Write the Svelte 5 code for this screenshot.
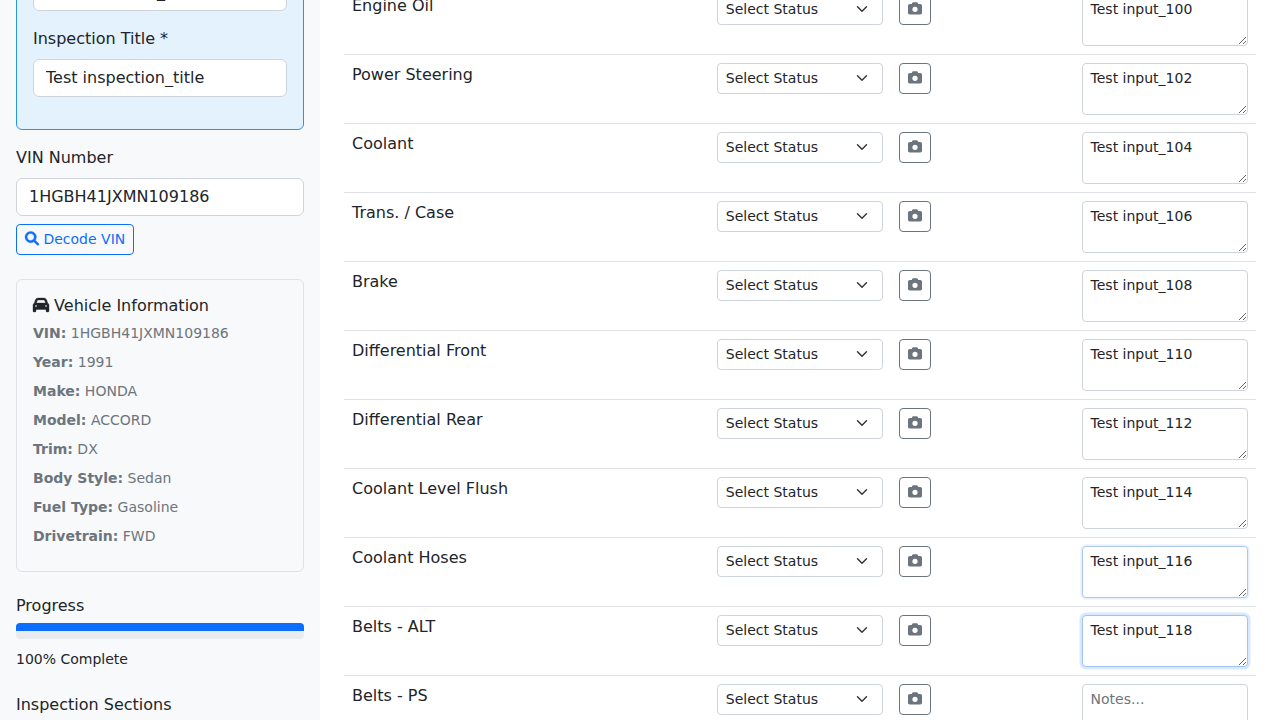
<script>
  const vehicle = [
    ['VIN', '1HGBH41JXMN109186'],
    ['Year', '1991'],
    ['Make', 'HONDA'],
    ['Model', 'ACCORD'],
    ['Trim', 'DX'],
    ['Body Style', 'Sedan'],
    ['Fuel Type', 'Gasoline'],
    ['Drivetrain', 'FWD'],
  ];

  const items = [
    { name: 'Engine Oil', note: 'Test input_100' },
    { name: 'Power Steering', note: 'Test input_102' },
    { name: 'Coolant', note: 'Test input_104' },
    { name: 'Trans. / Case', note: 'Test input_106' },
    { name: 'Brake', note: 'Test input_108' },
    { name: 'Differential Front', note: 'Test input_110' },
    { name: 'Differential Rear', note: 'Test input_112' },
    { name: 'Coolant Level Flush', note: 'Test input_114' },
    { name: 'Coolant Hoses', note: 'Test input_116', state: 'leaving' },
    { name: 'Belts - ALT', note: 'Test input_118', state: 'entering' },
    { name: 'Belts - PS', note: '' },
  ];

  const progress = 100;
</script>

<div class="page">
  <aside class="sidebar">
    <section class="details">
      <label for="inspector">Inspector Name *</label>
      <input id="inspector" class="control" type="text" value="Test inspector_name" />
      <label for="title">Inspection Title *</label>
      <input id="title" class="control" type="text" value="Test inspection_title" />
    </section>

    <section class="vin">
      <label for="vin">VIN Number</label>
      <input id="vin" class="control" type="text" value="1HGBH41JXMN109186" />
      <button class="btn decode" type="button">
        <svg class="icon heavy" viewBox="0 0 512 512" aria-hidden="true"><path d="M500.3 443.7l-119.7-119.7c27.22-40.41 40.65-90.9 33.46-144.7C401.8 87.79 326.8 13.32 235.2 1.723C99.01-15.51-15.51 99.01 1.724 235.2c11.6 91.64 86.08 166.7 177.6 178.9c53.8 7.189 104.3-6.236 144.7-33.46l119.7 119.7c15.62 15.62 40.95 15.62 56.57 0C515.9 484.7 515.9 459.3 500.3 443.7zM79.1 208c0-70.58 57.42-128 128-128s128 57.42 128 128c0 70.58-57.42 128-128 128S79.1 278.6 79.1 208z" /></svg>
        Decode VIN
      </button>
    </section>

    <section class="vehicle">
      <h6>
        <svg class="icon heavy" viewBox="0 0 512 512" aria-hidden="true"><path d="M135.2 117.4L109.1 192H402.9l-26.1-74.6C372.3 104.6 360.2 96 346.6 96H165.4c-13.6 0-25.7 8.6-30.2 21.4zM39.6 196.8L74.8 96.3C88.3 57.8 124.6 32 165.4 32H346.6c40.8 0 77.1 25.8 90.6 64.3l35.2 100.5c23.2 9.6 39.6 32.5 39.6 59.2V400v48c0 17.7-14.3 32-32 32H448c-17.7 0-32-14.3-32-32V400H96v48c0 17.7-14.3 32-32 32H32c-17.7 0-32-14.3-32-32V400 256c0-26.7 16.4-49.6 39.6-59.2zM128 288a32 32 0 1 0 -64 0 32 32 0 1 0 64 0zm288 32a32 32 0 1 0 0-64 32 32 0 1 0 0 64z" /></svg>
        Vehicle Information
      </h6>
      {#each vehicle as [key, value]}
        <p><strong>{key}:</strong> {value}</p>
      {/each}
    </section>

    <section class="progress-block">
      <h6>Progress</h6>
      <div class="track"><div class="bar" style="width: {progress}%"></div></div>
      <div class="percent"><small>{progress}% Complete</small></div>
    </section>

    <h6>Inspection Sections</h6>
  </aside>

  <main class="main">
    {#each items as item}
      <div class="row">
        <div class="cell">{item.name}</div>
        <div class="cell">
          <select class="status" aria-label="Status of {item.name}"><option>Select Status</option></select>
        </div>
        <div class="cell">
          <button class="btn photo" type="button" aria-label="Add photo">
            <svg class="icon" viewBox="0 0 512 512" aria-hidden="true"><path d="M149.1 64.8L138.7 96H64C28.7 96 0 124.7 0 160V416c0 35.3 28.7 64 64 64H448c35.3 0 64-28.7 64-64V160c0-35.3-28.7-64-64-64H373.3L362.9 64.8C356.4 45.2 338.1 32 317.4 32H194.6c-20.7 0-39 13.2-45.5 32.8zM256 192a96 96 0 1 1 0 192 96 96 0 1 1 0-192z" /></svg>
          </button>
        </div>
        <div class="cell">
          <textarea class="notes {item.state ?? ''}" rows="2" placeholder="Notes..." value={item.note}></textarea>
        </div>
      </div>
    {/each}
  </main>
</div>

<style>
  :global(body) {
    margin: 0;
    background: #fff;
  }
  .page,
  .page * {
    box-sizing: border-box;
  }
  .page {
    display: flex;
    height: 720px;
    overflow: hidden;
    font-family: 'DejaVu Sans', sans-serif;
    font-size: 16px;
    line-height: 1.5;
    color: #212529;
  }
  .sidebar {
    flex: 0 0 320px;
    padding: 0 16px;
    background: #f8f9fa;
  }
  .main {
    flex: 1;
    padding: 0 24px;
    margin-top: -14.4px;
  }
  h6 {
    margin: 0 0 8px;
    font-size: 16px;
    font-weight: 500;
    line-height: 1.2;
  }
  label {
    display: block;
    margin-bottom: 8px;
  }
  input,
  select,
  textarea,
  button {
    margin: 0;
    font-family: inherit;
    line-height: 1.5;
    color: #212529;
  }
  .icon {
    display: inline-block;
    width: 1em;
    height: 1em;
    vertical-align: -0.125em;
    fill: currentColor;
    overflow: visible;
  }
  .btn .icon {
    transform: translateY(0.4px);
  }
  .heavy {
    stroke: currentColor;
    stroke-width: 12;
  }
  .control {
    display: block;
    width: 100%;
    height: 38px;
    padding: 6px 12px;
    font-size: 16px;
    background: #fff;
    border: 1px solid #ced4da;
    border-radius: 6px;
  }
  .details {
    margin: -76.4px 0 16px;
    padding: 16px;
    background: #e3f2fd;
    border: 1px solid #2196f3;
    border-radius: 6px;
  }
  .details .control {
    margin-bottom: 16px;
  }
  .btn {
    display: block;
    height: 31px;
    padding: 4px 8px;
    font-size: 14px;
    background: transparent;
    border: 1px solid;
    border-radius: 4px;
  }
  .decode {
    margin-top: 8px;
    color: #0d6efd;
  }
  .photo {
    color: #6c757d;
  }
  .vehicle {
    margin: 24px 0;
    padding: 16px;
    border: 1px solid #dee2e6;
    border-radius: 6px;
  }
  .vehicle p {
    margin: 0 0 8px;
    font-size: 14px;
    color: #6c757d;
  }
  strong {
    font-weight: 700;
  }
  .progress-block {
    margin-bottom: 24px;
  }
  .track {
    height: 16px;
    margin-bottom: 8px;
    overflow: hidden;
    background: #e9ecef;
    border-radius: 4px;
  }
  .bar {
    height: 8px;
    background: #0d6efd;
  }
  .percent {
    height: 24px;
  }
  small {
    font-size: 14px;
  }
  .row {
    display: grid;
    grid-template-columns: 40% 20% 20% 20%;
    height: 69px;
    border-bottom: 1px solid #dee2e6;
  }
  .cell {
    padding: 8px;
  }
  .status {
    display: block;
    width: 100%;
    height: 31px;
    padding: 4px 36px 4px 8px;
    font-size: 14px;
    appearance: none;
    border: 1px solid #ced4da;
    border-radius: 4px;
    background: #fff
      url("data:image/svg+xml,%3csvg xmlns='http://www.w3.org/2000/svg' viewBox='0 0 16 16'%3e%3cpath fill='none' stroke='%23343a40' stroke-linecap='round' stroke-linejoin='round' stroke-width='2' d='m2 5 6 6 6-6'/%3e%3c/svg%3e")
      no-repeat right 12px center / 16px 12px;
  }
  .notes {
    display: block;
    width: 100%;
    height: 52px;
    padding: 4px 8px;
    font-size: 14px;
    background: #fff;
    border: 1px solid #ced4da;
    border-radius: 4px;
    resize: vertical;
    overflow: auto;
  }
  .notes::placeholder {
    color: #6c757d;
    opacity: 1;
  }
  .notes.leaving {
    border-color: #aecaeb;
    box-shadow: 0 0 0 1.6px rgba(13, 110, 253, 0.1);
  }
  .notes.entering {
    border-color: #a0c4f2;
    box-shadow: 0 0 0 2.5px rgba(13, 110, 253, 0.16);
  }
</style>
